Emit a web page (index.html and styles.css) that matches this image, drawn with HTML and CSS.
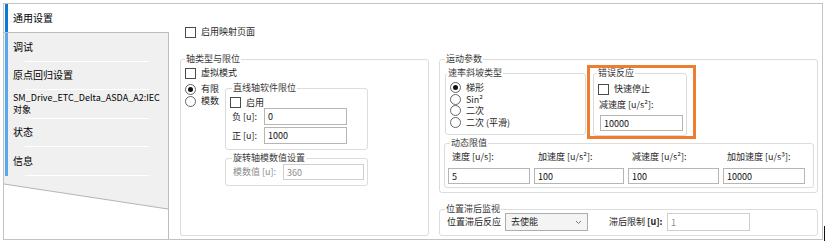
FILE: index.html
```html
<!DOCTYPE html>
<html lang="zh-cn">
<head>
    <meta charset="UTF-8">
    <title>通用设置</title>
    <link rel="stylesheet" href="styles.css">
</head>
<body>
    <div class="frame">
        <div class="tabs">
            <div class="tab tab-active">通用设置</div>
            <div class="tab-list">
                <div class="tab-stack">
                    <div class="tab">调试</div>
                    <div class="sep"></div>
                    <div class="tab">原点回归设置</div>
                    <div class="sep"></div>
                    <div class="tab tab-two">SM_Drive_ETC_Delta_ASDA_A2:IEC<br>对象</div>
                    <div class="sep"></div>
                    <div class="tab">状态</div>
                    <div class="sep"></div>
                    <div class="tab">信息</div>
                    <div class="sep"></div>
                </div>
                <svg class="tail" width="164" height="34" viewBox="0 0 164 34">
                    <polygon points="0,0 164,0 164,33 0,8" fill="#f0f0f0"/>
                    <line x1="0" y1="8" x2="164" y2="33" stroke="#b4b4b4" stroke-width="1"/>
                </svg>
            </div>
        </div>

        <div class="page">
            <div class="check map-row"><span class="box"></span>启用映射页面</div>

            <div class="columns">
                <fieldset class="group g-axis">
                    <legend>轴类型与限位</legend>
                    <div class="check axis-check"><span class="box"></span>虚拟模式</div>
                    <div class="axis-body">
                        <div class="radios">
                            <div class="radio"><span class="dot on"></span>有限</div>
                            <div class="radio"><span class="dot"></span>模数</div>
                        </div>
                        <div class="subs">
                            <fieldset class="group g-lin">
                                <legend>直线轴软件限位</legend>
                                <div class="check lin-check"><span class="box"></span>启用</div>
                                <div class="field">
                                    <span class="lbl lbl-lin">负 [u]:</span>
                                    <input class="inp inp-lin" type="text" value="0">
                                </div>
                                <div class="field field-next">
                                    <span class="lbl lbl-lin">正 [u]:</span>
                                    <input class="inp inp-lin" type="text" value="1000">
                                </div>
                            </fieldset>
                            <fieldset class="group g-mod">
                                <legend>旋转轴模数值设置</legend>
                                <div class="field field-mod">
                                    <span class="lbl lbl-mod">模数值 [u]:</span>
                                    <input class="inp inp-mod" type="text" value="360" disabled>
                                </div>
                            </fieldset>
                        </div>
                    </div>
                </fieldset>

                <div class="col-right">
                    <fieldset class="group g-motion">
                        <legend>运动参数</legend>
                        <div class="motion-top">
                            <fieldset class="group g-ramp">
                                <legend>速率斜坡类型</legend>
                                <div class="radio ramp"><span class="dot on"></span>梯形</div>
                                <div class="radio ramp"><span class="dot"></span>Sin²</div>
                                <div class="radio ramp"><span class="dot"></span>二次</div>
                                <div class="radio ramp"><span class="dot"></span>二次 (平滑)</div>
                            </fieldset>
                            <div class="mark">
                                <fieldset class="group g-err">
                                    <legend>错误反应</legend>
                                    <div class="check err-check"><span class="box"></span>快速停止</div>
                                    <div class="err-lbl">减速度 [u/s²]:</div>
                                    <input class="inp inp-err" type="text" value="10000">
                                </fieldset>
                            </div>
                        </div>
                        <fieldset class="group g-dyn">
                            <legend>动态限值</legend>
                            <div class="dyn-grid">
                                <div class="dyn-col"><span class="dyn-lbl">速度 [u/s]:</span><input class="inp" type="text" value="5"></div>
                                <div class="dyn-col"><span class="dyn-lbl">加速度 [u/s²]:</span><input class="inp" type="text" value="100"></div>
                                <div class="dyn-col"><span class="dyn-lbl">减速度 [u/s²]:</span><input class="inp" type="text" value="100"></div>
                                <div class="dyn-col"><span class="dyn-lbl">加加速度 [u/s³]:</span><input class="inp" type="text" value="10000"></div>
                            </div>
                        </fieldset>
                    </fieldset>

                    <fieldset class="group g-lag">
                        <legend>位置滞后监视</legend>
                        <div class="lag-row">
                            <span class="lbl lbl-lag">位置滞后反应</span>
                            <div class="select">
                                <span>去使能</span>
                                <svg width="7" height="5" viewBox="0 0 7 5"><polyline points="1,1 3.5,3.5 6,1" fill="none" stroke="#777" stroke-width="1"/></svg>
                            </div>
                            <span class="lbl lbl-limit">滞后限制 <b>[u]:</b></span>
                            <input class="inp inp-lag" type="text" value="1" disabled>
                        </div>
                    </fieldset>
                </div>
            </div>
        </div>
    </div>
    <div class="cursor"></div>
</body>
</html>
```

FILE: styles.css
```css
body { margin: 0; background: #fff; font-family: "Noto Sans CJK SC", "Noto Sans", sans-serif; font-size: 9px; color: #1e1e1e; }

.frame { margin: 3px 0 0 3px; width: 820px; height: 237px; border: 1px solid #c3c3c3; box-sizing: border-box; display: flex; }

/* tabs */
.tabs { width: 165px; display: flex; flex-direction: column; flex-shrink: 0; }
.tab { height: 27.5px; display: flex; flex-direction: column; justify-content: center; padding-left: 9px; font-size: 10px; color: #000; line-height: 12px; }
.tab-active { height: 28px; background: linear-gradient(to right, #fff 1px, #0a78d4 1px, #0a78d4 4px, #fff 4px); }
.tab-list { flex: 1; border-top: 1px solid #bdbdbd; border-right: 1px solid #bdbdbd; background: #fff; }
.tab-stack { background: linear-gradient(to right, #f0f0f0 1px, #59a8ee 1px, #59a8ee 4px, #f0f0f0 4px); }
.tab-two { font-size: 9px; line-height: 12px; white-space: nowrap; }
.sep { height: 1px; margin: 0 19px 0 21px; background: #fff; }
.tail { display: block; }

/* page */
.page { flex: 1; padding: 21px 0 0 11px; }
.check, .radio { display: flex; align-items: center; white-space: nowrap; }
.check { height: 14px; line-height: 14px; }
.box { width: 11px; height: 11px; border: 1px solid #4a4a4a; box-sizing: border-box; background: #fff; margin-right: 5px; flex-shrink: 0; }
.dot { width: 11px; height: 11px; border: 1px solid #666; border-radius: 50%; box-sizing: border-box; margin-right: 5px; display: flex; align-items: center; justify-content: center; flex-shrink: 0; background: #fff; }
.dot.on::after { content: ''; width: 5px; height: 5px; border-radius: 50%; background: #111; }
.map-row { margin-left: 5px; }

.columns { display: flex; gap: 10px; margin-top: 14px; }

.group { margin: 0; padding: 0; border: 1px solid #dcdcdc; border-radius: 3px; box-sizing: border-box; min-width: 0; }
.group legend { padding: 0 1px; line-height: 12px; color: #3a3a3a; font-size: 9px; }

.g-axis { width: 249px; height: 183px; padding-left: 4px; }
.axis-check { margin-top: 1px; }
.axis-body { display: flex; margin-top: 2px; }
.radios { width: 40px; padding-top: 1px; }
.radios .radio { height: 12px; line-height: 12px; }
.subs { width: 143px; display: flex; flex-direction: column; gap: 2px; }
.g-lin { height: 68px; padding-left: 6px; }
.lin-check { height: 11px; line-height: 11px; margin: 3px 0 0 -2px; }
.field { display: flex; align-items: center; height: 17px; line-height: 14px; }
.field-next { margin-top: 2px; }
.lbl { white-space: nowrap; flex-shrink: 0; }
.lbl-lin { width: 32px; }
.g-mod { height: 34px; padding-left: 7px; }
.g-mod legend { margin-left: -1px; }
.field-mod { height: 16px; }
.lbl-mod { width: 50px; color: #8c8c8c; }

.inp { font: inherit; color: #111; border: 1px solid #b5b5b5; background: #fff; padding: 0 3px; margin: 0; box-sizing: border-box; height: 16px; outline: none; }
.inp:disabled { color: #8f8f8f; border-color: #cfcfcf; background: #fff; }
.inp-lin { width: 83px; height: 17px; }
.inp-mod { width: 81px; }

.col-right { width: 379px; display: flex; flex-direction: column; gap: 10px; }
.g-motion { height: 140px; padding: 2px 0 0 5px; }
.motion-top { display: flex; align-items: flex-start; height: 70px; }
.g-ramp { width: 141px; height: 68px; padding: 3px 0 0 4px; }
.g-ramp legend { margin-left: -3px; }
.ramp { height: 11.5px; line-height: 11.5px; }
.mark { width: 109px; height: 74px; margin: -2px 0 0 1px; border: 3px solid #ed7d31; box-sizing: border-box; padding: 0 6px 0 3px; }
.g-err { width: 94px; height: 69px; margin-top: -1px; padding: 3px 0 0 5px; }
.g-err legend { margin-left: -2px; }
.err-check { margin-left: -1px; }
.err-lbl { line-height: 14px; margin-top: 2px; white-space: nowrap; }
.inp-err { width: 83px; margin: 3px 0 0 1px; display: block; }

.g-dyn { width: 370px; height: 51px; margin-left: -1px; padding: 1px 0 0 3px; }
.g-dyn legend { margin-left: 2px; }
.dyn-grid { display: grid; grid-template-columns: 82px 90px 91px 82px; column-gap: 4px; }
.dyn-col { display: flex; flex-direction: column; }
.dyn-lbl { line-height: 14px; padding-left: 4px; white-space: nowrap; }
.dyn-col .inp { width: 100%; margin-top: 4px; }

.g-lag { height: 33px; padding-left: 7px; }
.g-lag legend { margin-left: -2px; }
.lag-row { display: flex; align-items: center; height: 18px; margin-top: -2px; line-height: 14px; }
.lbl-lag { width: 58px; }
.select { width: 83px; height: 18px; border: 1px solid #adadad; background: #f4f4f4; box-sizing: border-box; display: flex; align-items: center; justify-content: space-between; padding: 0 5px 0 5px; }
.lbl-limit { width: 58px; margin-left: 21px; }
.lbl-limit b { font-weight: bold; }
.inp-lag { width: 83px; height: 18px; }

.cursor { position: absolute; left: 824px; top: 226px; width: 1px; height: 15px; background: #111; }
```
